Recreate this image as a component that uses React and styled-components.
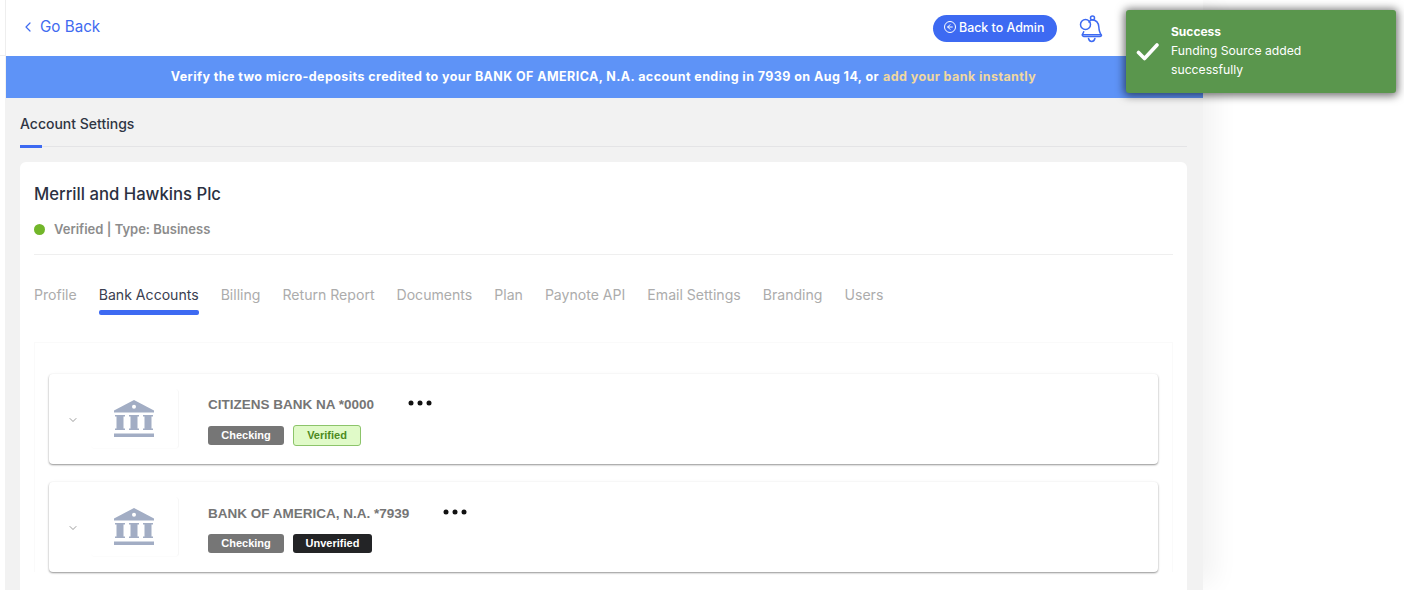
import React from "react";
import styled, { createGlobalStyle } from "styled-components";
import { ChevronLeft, ChevronDown, ArrowLeft } from "lucide-react";

const Global = createGlobalStyle`
  html, body { margin: 0; padding: 0; background: #fff; height: 590px; overflow: hidden; }
  body { font-family: Inter, "Liberation Sans", sans-serif; color: #2b3142; }
  * { box-sizing: border-box; }
`;

const Page = styled.div`
  display: flex;
  width: 1404px;
  height: 590px;
  overflow: hidden;
  position: relative;
`;
const Strip = styled.aside`
  width: 6px;
  flex: none;
  background: #fff;
`;
const StripEdge = styled.div`
  height: 56px;
  border-right: 1px solid #eeeeee;
  border-bottom: 1px solid #eeeeee;
`;
const StripRest = styled.div`
  height: 534px;
  border-right: 1px solid #f2f2f2;
`;
const Main = styled.main`
  width: 1197px;
  height: 590px;
  flex: none;
  background: #f2f2f2;
  box-shadow: 18px 0 24px -6px rgba(0, 0, 0, 0.05);
  display: flex;
  flex-direction: column;
`;
const Header = styled.header`
  height: 56px;
  flex: none;
  background: #fff;
  display: flex;
  align-items: center;
  padding: 0 98px 0 14px;
`;
const GoBack = styled.a`
  display: flex;
  align-items: center;
  gap: 4px;
  color: #3f6bf0;
  font-size: 15.2px;
  line-height: 20px;
  margin-top: -3px;
`;
const AdminButton = styled.button`
  margin-left: auto;
  display: flex;
  align-items: center;
  gap: 3px;
  height: 27px;
  width: 124px;
  padding: 0 0 2px 11px;
  border: 0;
  border-radius: 14px;
  background: #3d6af2;
  color: #fff;
  font: 500 12.4px Inter, sans-serif;
`;
const BackCircle = styled.span`
  width: 12px;
  height: 12px;
  border: 1.4px solid #fff;
  border-radius: 50%;
  display: flex;
  align-items: center;
  justify-content: center;
`;
const Bell = styled.svg`
  width: 28px;
  height: 30px;
  margin-left: 21px;
  margin-right: -1px;
`;
const Banner = styled.div`
  height: 42px;
  flex: none;
  background: #5e93f7;
  color: #fff;
  display: flex;
  align-items: center;
  justify-content: center;
  font-size: 12.5px;
  font-weight: 700;
  letter-spacing: 0.42px;
  padding: 0 2px 2px 0;
`;
const BannerLink = styled.span`
  color: #f0d8a0;
  margin-left: 4px;
`;
const Content = styled.div`
  flex: none;
  padding: 0 16px 0 14px;
`;
const SectionTabs = styled.div`
  height: 49px;
  border-bottom: 1px solid #e4e4e6;
  position: relative;
  padding-top: 17px;
  font-size: 14px;
  font-weight: 500;
  line-height: 18px;
  color: #2f3543;
  &::after {
    content: "";
    position: absolute;
    left: 0;
    bottom: -2px;
    width: 22px;
    height: 3px;
    background: #3d6af2;
  }
`;
const Card = styled.section`
  margin-top: 15px;
  background: #fff;
  border-radius: 6px;
  padding: 0 14px;
  height: 500px;
`;
const Title = styled.h1`
  margin: 0;
  padding-top: 21px;
  font-size: 16.7px;
  line-height: 22px;
  font-weight: 500;
  color: #2b3142;
`;
const Status = styled.div`
  display: flex;
  align-items: center;
  gap: 9px;
  margin-top: 16px;
  height: 16px;
  font-size: 13px;
  font-weight: 600;
  color: #8c8c8c;
`;
const Dot = styled.span`
  width: 11px;
  height: 11px;
  border-radius: 50%;
  background: #72b62a;
`;
const Divider = styled.hr`
  border: 0;
  border-top: 1px solid #efefef;
  margin: 17px 0 0;
`;
const TabRow = styled.nav`
  display: flex;
  gap: 22px;
  margin-top: 30px;
`;
const Tab = styled.a`
  position: relative;
  font-size: 14.08px;
  line-height: 20px;
  padding-bottom: 10px;
  color: ${(p) => (p.$active ? "#3a4050" : "#acacac")};
  &::after {
    content: "";
    display: ${(p) => (p.$active ? "block" : "none")};
    position: absolute;
    left: 0;
    right: 0;
    bottom: 0;
    height: 5px;
    border-radius: 2px;
    background: #3d6af2;
  }
`;
const Panel = styled.div`
  margin-top: 27px;
  border: 1px solid #fafafa;
  border-bottom: 0;
  padding: 31px 14px 0;
  display: flex;
  flex-direction: column;
  gap: 18px;
`;
const Bank = styled.article`
  height: 90px;
  flex: none;
  border-radius: 4px;
  background: #fff;
  box-shadow: 0 1px 2px rgba(0, 0, 0, 0.42), 0 0 4px rgba(0, 0, 0, 0.03);
  display: flex;
  align-items: center;
`;
const Toggle = styled.span`
  width: 42px;
  padding-left: 18px;
  display: flex;
  margin-top: 2px;
  color: #666;
`;
const Logo = styled.div`
  width: 88px;
  height: 60px;
  border-right: 1px solid #f7f7f7;
  border-bottom: 1px solid #fcfcfc;
  border-radius: 4px;
  display: flex;
  align-items: center;
  justify-content: center;
  padding-right: 2px;
`;
const Info = styled.div`
  margin-left: 29px;
  display: flex;
  flex-direction: column;
  gap: 11px;
  padding-top: 3px;
`;
const NameRow = styled.div`
  display: flex;
  align-items: center;
  height: 18px;
`;
const BankName = styled.span`
  font: 700 13.5px/18px "Liberation Sans", Arial, sans-serif;
  color: #757575;
`;
const Dots = styled.svg`
  width: 24px;
  height: 6px;
  margin: -3px 0 0 34px;
`;
const Badges = styled.div`
  display: flex;
  align-items: center;
  gap: 9px;
`;
const Badge = styled.span`
  display: flex;
  align-items: center;
  justify-content: center;
  height: ${(p) => (p.$tone === "verified" ? "21px" : "19px")};
  width: ${(p) => p.$w}px;
  border-radius: 3px;
  font: 700 11px "Liberation Sans", Arial, sans-serif;
  color: ${(p) => (p.$tone === "verified" ? "#4d8a22" : "#fff")};
  background: ${(p) =>
    p.$tone === "verified" ? "#e0fac8" : p.$tone === "dark" ? "#232426" : "#767676"};
  border: ${(p) => (p.$tone === "verified" ? "1px solid #8cc46a" : "0")};
`;
const Toast = styled.div`
  position: absolute;
  left: 1126px;
  top: 10px;
  width: 270px;
  height: 83px;
  border-radius: 3px;
  background: #5a964d;
  box-shadow: 0 1px 9px 2px rgba(0, 0, 0, 0.55);
  color: #fff;
  display: flex;
  align-items: center;
  padding-left: 10px;
`;
const ToastIcon = styled.svg`
  width: 24px;
  height: 20px;
  margin-right: 11px;
  flex: none;
`;
const ToastText = styled.div`
  font-size: 12.2px;
  line-height: 19px;
  width: 170px;
  margin-top: -2px;
`;
const ToastTitle = styled.div`
  font-weight: 700;
  font-size: 12px;
`;

const BankIcon = () => (
  <svg width="40" height="38" viewBox="0 0 40 38" fill="#a2adc4">
    <path fillRule="evenodd" d="M20 0 40 10.500V12.500H0V10.500ZM20 4.800a2 2 0 1 0 0 4 2 2 0 0 0 0-4Z" />
    <path d="M1 15h10v1.500h-1.500v12H11V30H1v-1.500h1.500v-12H1ZM15 15h10v1.500h-1.500v12H25V30H15v-1.500h1.500v-12H15ZM29 15h10v1.500h-1.500v12H39V30H29v-1.500h1.500v-12H29Z" />
    <rect x="0" y="33.500" width="40" height="3.500" />
  </svg>
);

const banks = [
  { name: "CITIZENS BANK NA *0000", second: "Verified", tone: "verified", w: 68 },
  { name: "BANK OF AMERICA, N.A. *7939", second: "Unverified", tone: "dark", w: 79 },
];
const tabs = ["Profile", "Bank Accounts", "Billing", "Return Report", "Documents", "Plan", "Paynote API", "Email Settings", "Branding", "Users"];

export default function App() {
  return (
    <Page>
      <Global />
      <Strip>
        <StripEdge />
        <StripRest />
      </Strip>
      <Main>
        <Header>
          <GoBack>
            <ChevronLeft size={16} strokeWidth={1.8} />
            Go Back
          </GoBack>
          <AdminButton>
            <BackCircle>
              <ArrowLeft size={8} strokeWidth={3} />
            </BackCircle>
            Back to Admin
          </AdminButton>
          <Bell viewBox="0 0 28 30" fill="none" stroke="#3d6af2" strokeWidth="1.5" strokeLinecap="round" strokeLinejoin="round">
            <circle cx="7.500" cy="11.500" r="5" />
            <circle cx="14.500" cy="5" r="2" />
            <path d="M11 9c1-1.800 2.200-2.500 3.500-2.300 4 .5 6 3.500 6.300 7 .2 3.500 1 6.500 2.700 8.500-.3 1-1 1.300-2 1.300H7c-1.500 0-3-.5-2.700-1.800.5-1 1-1.700 1.400-3" />
            <path d="M4.500 21.800h18" />
            <path d="M10.500 25.500c.5 2 1.800 3 3.200 3s2.700-1 3.200-3" />
          </Bell>
        </Header>
        <Banner>
          Verify the two micro-deposits credited to your BANK OF AMERICA, N.A. account ending in 7939 on Aug 14, or
          <BannerLink>add your bank instantly</BannerLink>
        </Banner>
        <Content>
          <SectionTabs>Account Settings</SectionTabs>
          <Card>
            <Title>Merrill and Hawkins Plc</Title>
            <Status>
              <Dot />
              Verified | Type: Business
            </Status>
            <Divider />
            <TabRow>
              {tabs.map((t) => (
                <Tab key={t} $active={t === "Bank Accounts"}>{t}</Tab>
              ))}
            </TabRow>
            <Panel>
              {banks.map((b) => (
                <Bank key={b.name}>
                  <Toggle>
                    <ChevronDown size={12} strokeWidth={1.3} />
                  </Toggle>
                  <Logo>
                    <BankIcon />
                  </Logo>
                  <Info>
                    <NameRow>
                      <BankName>{b.name}</BankName>
                      <Dots viewBox="0 0 24 6" fill="#111">
                        <circle cx="3" cy="3" r="2.500" />
                        <circle cx="12" cy="3" r="2.500" />
                        <circle cx="21" cy="3" r="2.500" />
                      </Dots>
                    </NameRow>
                    <Badges>
                      <Badge $w={76}>Checking</Badge>
                      <Badge $w={b.w} $tone={b.tone}>{b.second}</Badge>
                    </Badges>
                  </Info>
                </Bank>
              ))}
            </Panel>
          </Card>
        </Content>
      </Main>
      <Toast>
        <ToastIcon viewBox="0 0 24 20" fill="none" stroke="#fff" strokeWidth="3.600" strokeLinecap="round" strokeLinejoin="round">
          <path d="M2.500 10.500 8.500 16.500 21 3" />
        </ToastIcon>
        <ToastText>
          <ToastTitle>Success</ToastTitle>
          Funding Source added successfully
        </ToastText>
      </Toast>
    </Page>
  );
}
